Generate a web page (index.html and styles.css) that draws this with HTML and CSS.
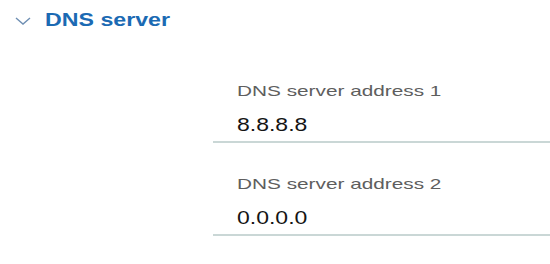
FILE: index.html
```html
<!DOCTYPE html>
<html lang="en">
	<head>
		<meta charset="utf-8" />
		<title>DNS server</title>
		<link rel="stylesheet" href="styles.css">
	</head>
	<body>
		<section class="group">
			<div class="group-head">
				<svg class="chevron" width="16" height="8" viewBox="0 0 16 8">
					<path d="M1 1 L8 7 L15 1" fill="none" stroke="#6f8fb3" stroke-width="1.4" />
				</svg>
				<span class="group-title">DNS server</span>
			</div>
			<div class="fields">
				<div class="field">
					<div class="field-label"><span>DNS server address 1</span></div>
					<div class="field-value"><span>8.8.8.8</span></div>
				</div>
				<div class="field">
					<div class="field-label"><span>DNS server address 2</span></div>
					<div class="field-value"><span>0.0.0.0</span></div>
				</div>
			</div>
		</section>
	</body>
</html>
```
FILE: styles.css
```css
body{
	margin:0;
	background:#fff;
	font-family:"Liberation Sans", Arial, sans-serif;
}
.group-head{
	display:flex;
	align-items:center;
	padding:9px 0 0 15px;
}
.chevron{
	display:block;
	margin:1px 14px 0 0;
}
.group-title{
	display:inline-block;
	font-size:19px;
	line-height:22px;
	font-weight:bold;
	color:#1b6ab3;
	transform:scaleX(1.22);
	transform-origin:left center;
}
.fields{
	margin:19px 0 0 213px;
}
.field{
	padding:32px 0 5px 24px;
	border-bottom:2px solid #cad7d6;
}
.field-label{
	font-size:15px;
	line-height:18px;
	color:#5e5e5e;
}
.field-value{
	margin-top:14px;
	font-size:19px;
	line-height:22px;
	color:#141414;
}
.field-label span,
.field-value span{
	display:inline-block;
	transform-origin:left center;
}
.field-label span{
	transform:scaleX(1.385);
}
.field-value span{
	transform:scaleX(1.21);
}
```
